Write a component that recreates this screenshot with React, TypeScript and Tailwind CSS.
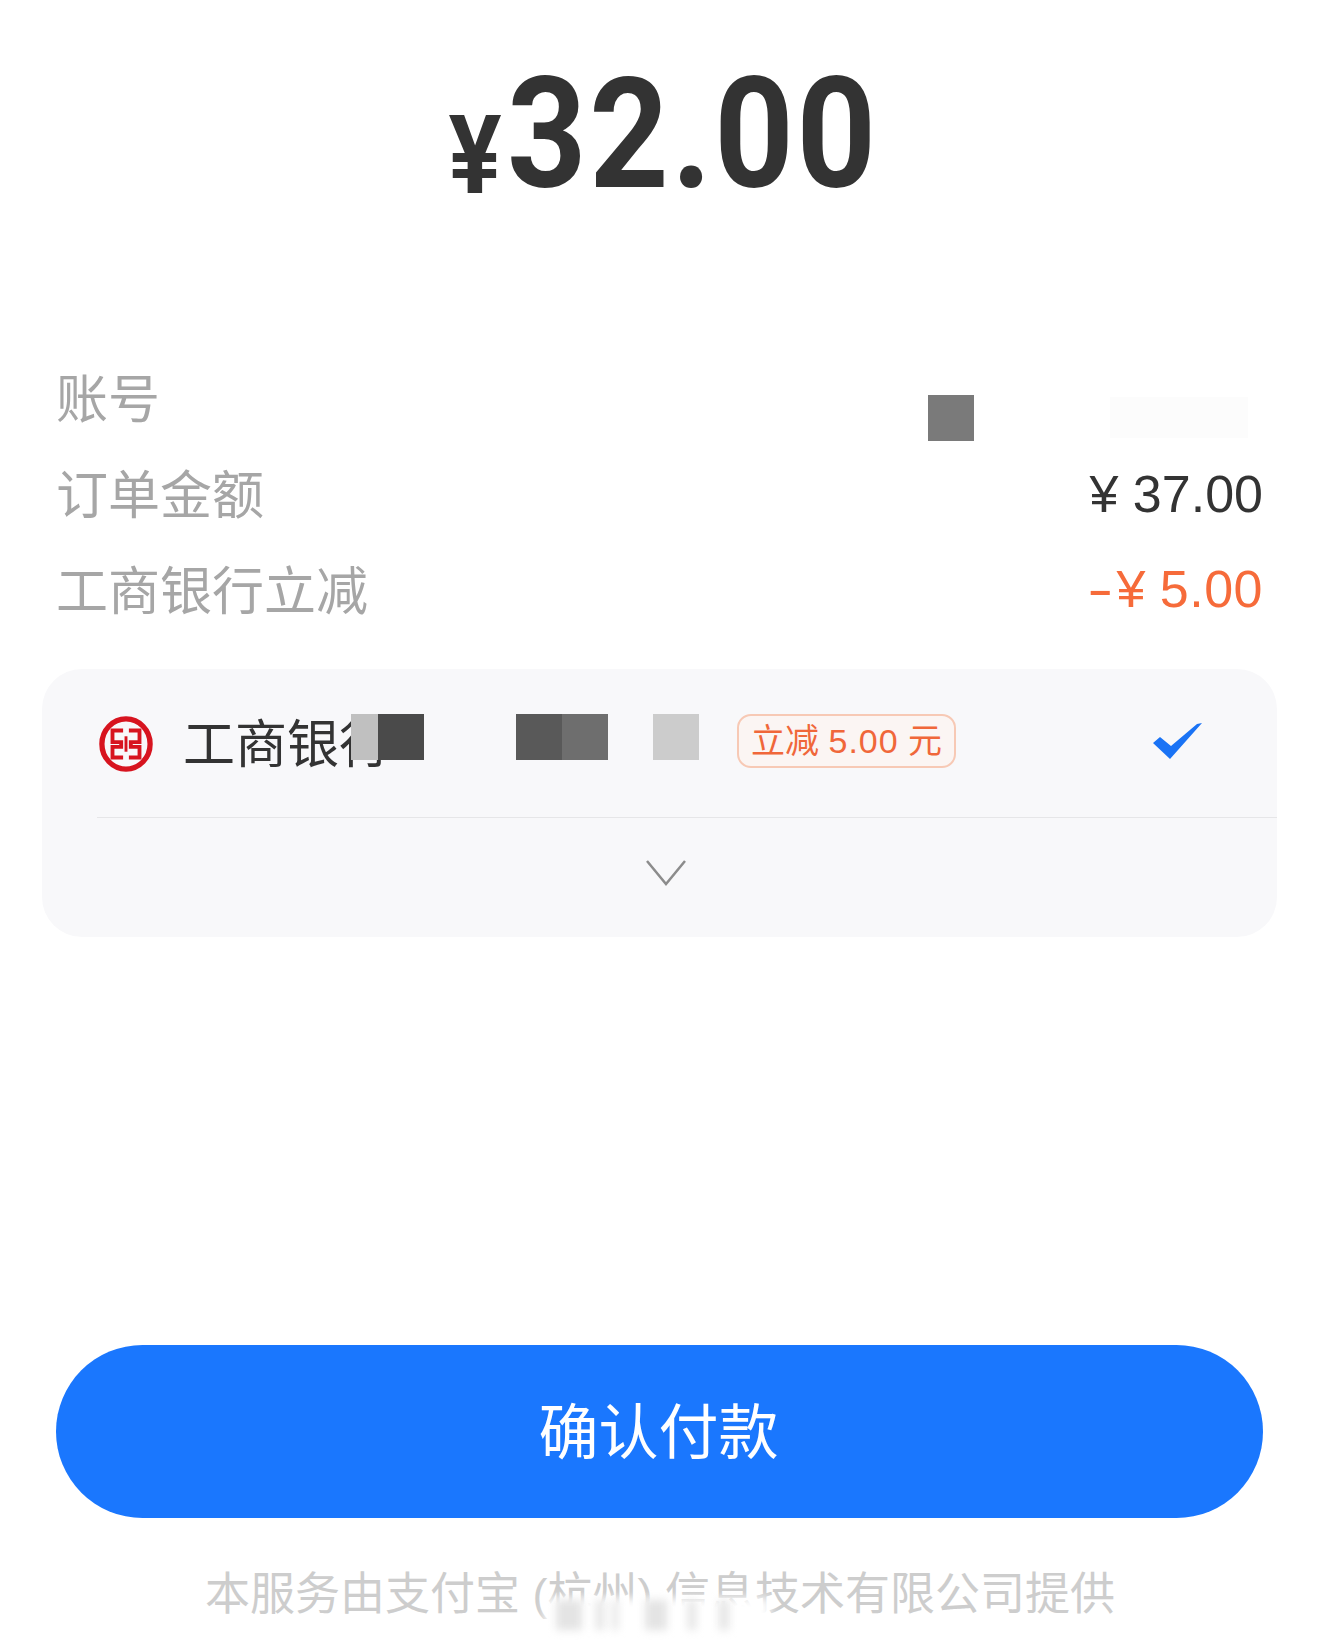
const cjk = 'font-["Liberation_Sans","Noto_Sans_CJK_SC",sans-serif]';

const smudgeBars = [
  { x: 556, w: 26 },
  { x: 596, w: 8 },
  { x: 612, w: 6 },
  { x: 645, w: 22 },
  { x: 688, w: 8 },
  { x: 719, w: 10 },
];

function IcbcLogo() {
  return (
    <svg viewBox="0 0 56 58" className="mt-[2px] ml-[2px] h-[58px] w-[54px] shrink-0" fill="none" stroke="#d7141f">
      <ellipse cx="28" cy="29" rx="25" ry="26" strokeWidth="5.5" />
      <path d="M25 15H14V27H23V32H14V43H25" strokeWidth="4" />
      <path d="M31 15H42V27H33V32H42V43H31" strokeWidth="4" />
      <path d="M28 21V37" strokeWidth="3" />
    </svg>
  );
}

function Row({ label, children }: { label: string; children?: React.ReactNode }) {
  return (
    <div className="flex h-[96px] items-center justify-between">
      <span className="text-[52px] leading-none font-normal text-[#a6a6a6]">{label}</span>
      {children}
    </div>
  );
}

export default function App() {
  return (
    <div className={`relative flex h-[1643px] w-[1320px] flex-col overflow-hidden bg-white ${cjk}`}>
      {/* amount */}
      <div className="flex h-[352px] scale-x-90 items-start justify-center pt-[43px] pl-[8px] font-['Roboto',sans-serif] font-bold text-[#333333]">
        <span className="mt-[58px] text-[110px] leading-none">¥</span>
        <span className="ml-[6px] text-[154px] leading-[1.2] tracking-[3px]">32.00</span>
      </div>

      {/* order details */}
      <div className="flex flex-col pr-[57px] pl-[56px]">
        <Row label="账号" />
        <Row label="订单金额">
          <span className="mb-[5px] text-[52px] leading-none text-[#333333]">¥ 37.00</span>
        </Row>
        <Row label="工商银行立减">
          <span className="mb-[7px] text-[52px] leading-none text-[#f66b3a]">
            <span className="mr-[3px] inline-block origin-right scale-x-150">-</span>¥{' '}
            <span className="tracking-[0.5px]">5.00</span>
          </span>
        </Row>
      </div>

      {/* payment method */}
      <div className="mt-[29px] ml-[42px] w-[1235px] rounded-[40px] bg-[#f8f8fa]">
        <div className="ml-[55px] flex h-[149px] items-center border-b border-[#e6e6e8] pr-[75px]">
          <IcbcLogo />
          <span className="mt-[4px] ml-[30px] text-[52px] leading-none whitespace-nowrap text-[#333333]">工商银行</span>
          <span className="mb-[5px] ml-[346px] rounded-[14px] border-2 border-[#f7c9b5] bg-[#fbf5f3] px-[12px] py-[3px] text-[34px] leading-[44px] whitespace-nowrap text-[#f0673a]">
            立减 <span className="tracking-[1px]">5.00</span> 元
          </span>
          <svg viewBox="0 0 49 36" className="mb-[4px] ml-auto h-[36px] w-[49px]" fill="#1a73f5">
            <path d="M0 20 L7 14 L18 23 L44 1 L49 0 L17 36 Z" />
          </svg>
        </div>
        <div className="flex h-[119px] items-center justify-center pb-[10px] pl-[12px]">
          <svg viewBox="0 0 42 28" className="h-[28px] w-[42px]" fill="none" stroke="#8c8c8c" strokeWidth="2.5">
            <path d="M2 2 L21 25 L40 2" />
          </svg>
        </div>
      </div>

      {/* confirm button */}
      <button className="mt-[408px] ml-[56px] flex h-[173px] w-[1207px] items-center justify-center rounded-full bg-[#1a77fe] pt-[4px] pr-[2px] text-[60px] leading-none font-normal text-white">
        确认付款
      </button>

      <p className="mt-[54px] pl-[205px] text-[45px] leading-none whitespace-nowrap text-[#cdcdcd]">
        本服务由支付宝 (杭州) 信息技术有限公司提供
      </p>

      {/* mosaic redaction blocks */}
      <div className="absolute top-[397px] left-[1110px] z-10 h-[41px] w-[138px] bg-[#fcfcfc]" />
      <div className="absolute top-[395px] left-[928px] z-10 h-[46px] w-[46px] bg-[#7a7a7a]" />
      <div className="absolute top-[714px] left-[351px] z-10 h-[46px] w-[27px] bg-[#c0c0c0]" />
      <div className="absolute top-[714px] left-[378px] z-10 h-[46px] w-[46px] bg-[#4a4a4a]" />
      <div className="absolute top-[714px] left-[516px] z-10 h-[46px] w-[46px] bg-[#595959]" />
      <div className="absolute top-[714px] left-[562px] z-10 h-[46px] w-[46px] bg-[#6e6e6e]" />
      <div className="absolute top-[714px] left-[653px] z-10 h-[46px] w-[46px] bg-[#cccccc]" />

      {/* smudge over the footer */}
      <div className="absolute top-[1598px] left-[545px] z-10 h-[40px] w-[225px] bg-white blur-[5px]" />
      {smudgeBars.map((bar) => (
        <div
          key={bar.x}
          className="absolute top-[1600px] z-10 h-[30px] bg-[#e4e4e4] blur-[4px]"
          style={{ left: bar.x, width: bar.w }}
        />
      ))}
    </div>
  );
}
